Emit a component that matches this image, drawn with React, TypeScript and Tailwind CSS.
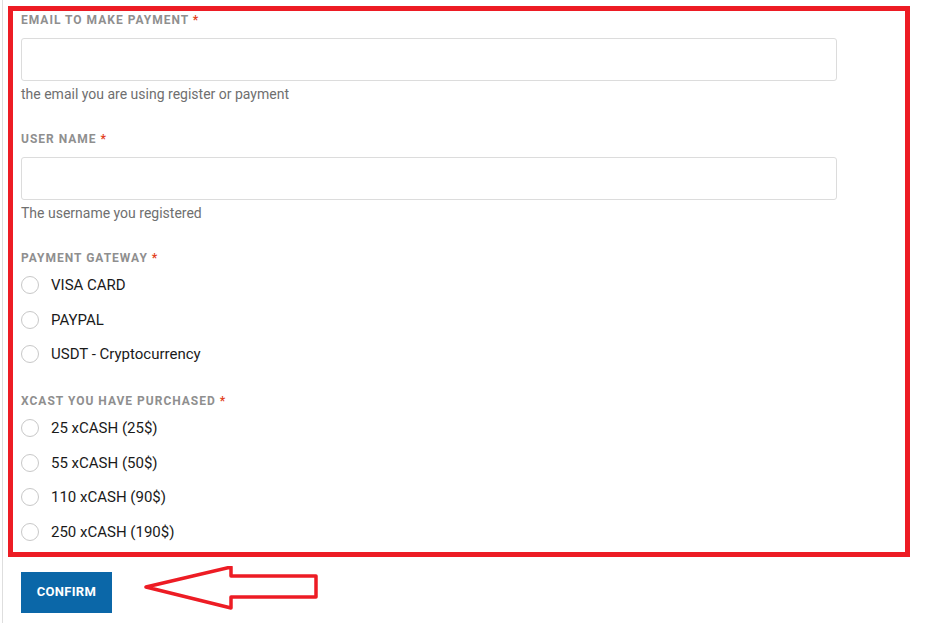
import React from "react";

function Label({ text }: { text: string }) {
  return (
    <div className="h-[16px] text-[12px] leading-[16px] font-bold tracking-[1px] text-[#8f8f8f]">
      {text} <span className="text-[#e2401c]">*</span>
    </div>
  );
}

function Radio({ text }: { text: string }) {
  return (
    <label className="flex h-[34.4px] items-center">
      <span className="ml-0 h-[18px] w-[18px] rounded-full border border-[#c8c8c8] bg-white" />
      <span className="ml-[12px] text-[15px] leading-[20px] text-[#1a1a1a]">{text}</span>
    </label>
  );
}

export default function App() {
  return (
    <div
      className="relative min-h-[623px] w-[927px] bg-white"
      style={{ fontFamily: "Roboto, 'Liberation Sans', sans-serif" }}
    >
      <div className="ml-[2px] min-h-[623px] border-l border-[#dedede] pl-[5px] pt-[6px]">
        <div className="w-[902px] border-[5px] border-[#ed1c24] px-[8px] pb-[3px] pt-[1px]">
          <Label text="EMAIL TO MAKE PAYMENT" />
          <div className="mt-[10px] h-[43px] w-[816px] rounded-[3px] border border-[#dcdcdc] bg-white" />
          <div className="mt-[3px] text-[14px] leading-[20px] text-[#6f6f6f]">
            the email you are using register or payment
          </div>

          <div className="mt-[27px]">
            <Label text="USER NAME" />
          </div>
          <div className="mt-[10px] h-[43px] w-[816px] rounded-[3px] border border-[#dcdcdc] bg-white" />
          <div className="mt-[3px] text-[14px] leading-[20px] text-[#6f6f6f]">
            The username you registered
          </div>

          <div className="mt-[27px]">
            <Label text="PAYMENT GATEWAY" />
          </div>
          <div className="mt-[2px] flex flex-col">
            <Radio text="VISA CARD" />
            <Radio text="PAYPAL" />
            <Radio text="USDT - Cryptocurrency" />
          </div>

          <div className="mt-[22px]">
            <Label text="XCAST YOU HAVE PURCHASED" />
          </div>
          <div className="mt-[2px] flex flex-col">
            <Radio text="25 xCASH (25$)" />
            <Radio text="55 xCASH (50$)" />
            <Radio text="110 xCASH (90$)" />
            <Radio text="250 xCASH (190$)" />
          </div>
        </div>

        <div className="mt-[9px] flex items-start">
          <button className="ml-[13px] mt-[6px] h-[41px] w-[91px] bg-[#0b67a8] text-[13px] font-bold tracking-[0.3px] text-white">
            CONFIRM
          </button>
          <svg
            width="180"
            height="50"
            viewBox="0 0 180 50"
            className="ml-[31px]"
          >
            <polygon
              points="3,21 88,1 88,10 173,10 173,31 88,31 88,42"
              fill="none"
              stroke="#ed1c24"
              strokeWidth="3.5"
              strokeLinejoin="round"
            />
          </svg>
        </div>
      </div>
    </div>
  );
}
